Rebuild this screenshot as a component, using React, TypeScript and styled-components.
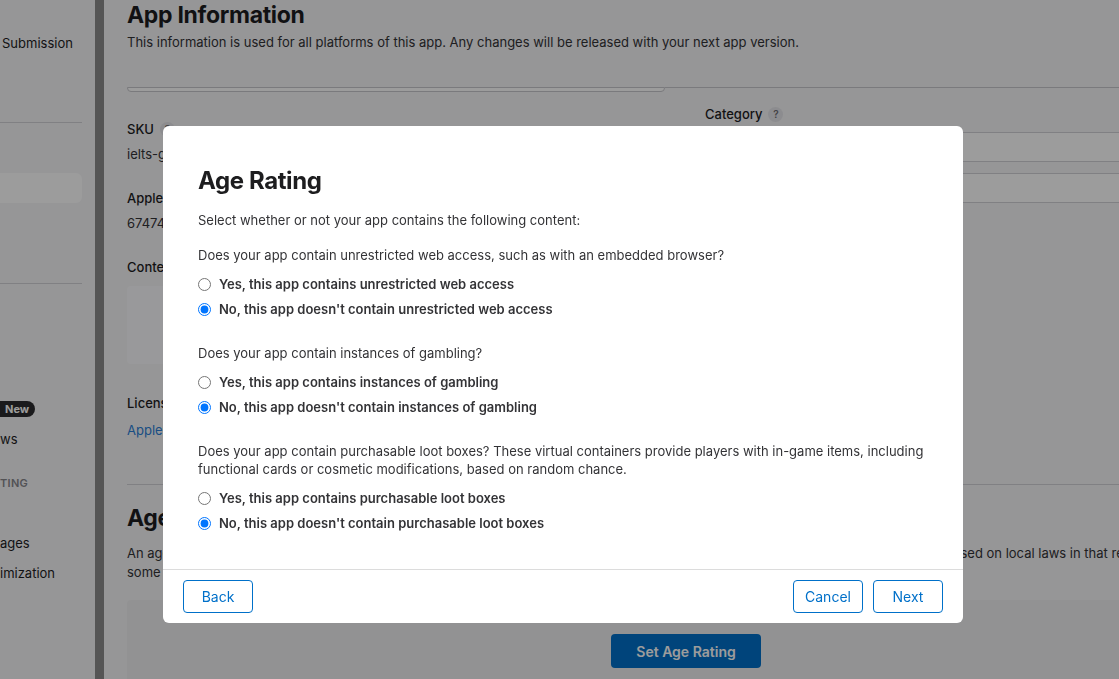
import React from "react";
import styled, { createGlobalStyle } from "styled-components";

const Global = createGlobalStyle`
  html, body { margin: 0; padding: 0; }
  body {
    font-family: Inter, "Noto Sans", "Liberation Sans", sans-serif;
    color: #1d1d1f;
    -webkit-font-smoothing: antialiased;
  }
  * { box-sizing: border-box; }
`;

const Page = styled.div`
  display: flex;
  height: 679px;
  overflow: hidden;
  background: #f5f5f7;
`;

const Sidebar = styled.nav`
  width: 95px;
  flex: none;
  display: flex;
  flex-direction: column;
  padding-right: 13px;
  overflow: hidden;
`;

const SideItem = styled.div<{ $mt?: number; $active?: boolean; $indent?: number }>`
  margin-top: ${(p) => p.$mt ?? 0}px;
  height: 30px;
  display: flex;
  align-items: center;
  padding-left: ${(p) => p.$indent ?? 0}px;
  font-size: 13px;
  color: #1d1d1f;
  white-space: nowrap;
  border-radius: 0 6px 6px 0;
  background: ${(p) => (p.$active ? "#ffffff" : "transparent")};
`;

const SideSection = styled(SideItem)`
  font-size: 11px;
  font-weight: 600;
  letter-spacing: 0.3px;
  color: #86868b;
`;

const SideRule = styled.div<{ $mt: number }>`
  margin-top: ${(p) => p.$mt}px;
  height: 1px;
  background: #d2d2d7;
`;

const Badge = styled.span`
  margin-left: -8px;
  padding: 0 6px 0 13px;
  height: 16px;
  line-height: 16px;
  border-radius: 8px;
  background: #2c2c2e;
  color: #ffffff;
  font-size: 11px;
  font-weight: 700;
`;

const Strip = styled.div`
  width: 9px;
  flex: none;
  background: #8b8b8b;
`;

const Main = styled.main`
  flex: 1;
  min-width: 0;
  overflow: hidden;
  padding-left: 23px;
`;

const Content = styled.div`
  width: 1118px;
  display: flex;
  flex-direction: column;
`;

const H1 = styled.h1<{ $mt: number }>`
  margin: ${(p) => p.$mt}px 0 0;
  font-size: 23px;
  line-height: 30px;
  letter-spacing: -0.3px;
  font-weight: 700;
  color: #1d1d1f;
`;

const Lead = styled.p<{ $mt: number }>`
  margin: ${(p) => p.$mt}px 0 0;
  font-size: 13px;
  line-height: 19px;
  color: #333336;
  white-space: nowrap;
`;

const TopRow = styled.div`
  margin-top: 35px;
  display: flex;
  align-items: flex-start;
`;

const Stub = styled.div`
  width: 538px;
  height: 5px;
  border: 1px solid #c7c7cc;
  border-radius: 0 0 4px 4px;
  background: #ffffff;
`;

const StubRule = styled.div`
  flex: 1;
  border-top: 1px solid #c7c7cc;
`;

const Grid = styled.div`
  margin-top: 13px;
  display: grid;
  grid-template-columns: 538px 1fr;
  column-gap: 40px;
  align-items: start;
`;

const Col = styled.div<{ $mt?: number }>`
  margin-top: ${(p) => p.$mt ?? 0}px;
  display: flex;
  flex-direction: column;
`;

const FieldLabel = styled.div<{ $mt?: number }>`
  margin-top: ${(p) => p.$mt ?? 0}px;
  display: flex;
  align-items: center;
  gap: 6px;
  height: 18px;
  font-size: 13px;
  font-weight: 500;
  color: #1d1d1f;
`;

const Help = styled.span`
  width: 15px;
  height: 15px;
  border-radius: 50%;
  background: #e5e5ea;
  color: #6e6e73;
  font-size: 10px;
  font-weight: 600;
  display: inline-flex;
  align-items: center;
  justify-content: center;
`;

const FieldValue = styled.div<{ $mt?: number; $link?: boolean }>`
  margin-top: ${(p) => p.$mt ?? 0}px;
  height: 18px;
  line-height: 18px;
  font-size: 13px;
  color: ${(p) => (p.$link ? "#2b7fd6" : "#333336")};
`;

const RightsBox = styled.div`
  margin-top: 10px;
  height: 78px;
  border-radius: 4px;
  background: #fbfbfd;
`;

const SelectBox = styled.div<{ $mt: number }>`
  margin-top: ${(p) => p.$mt}px;
  height: 30px;
  border: 1px solid #d2d2d7;
  border-radius: 4px;
  background: #ffffff;
`;

const SectionRule = styled.div`
  margin-top: 45px;
  height: 1px;
  background: #d2d2d7;
`;

const RatingPanel = styled.div`
  margin-top: 18px;
  height: 120px;
  border-radius: 4px;
  background: #efeff1;
  display: flex;
  justify-content: center;
  padding-top: 34px;
`;

const PrimaryButton = styled.button`
  width: 150px;
  height: 34px;
  border: 0;
  border-radius: 4px;
  background: #0070c9;
  color: #ffffff;
  font-family: inherit;
  font-size: 14px;
  font-weight: 600;
`;

const Overlay = styled.div`
  position: fixed;
  inset: 0;
  background: rgba(0, 0, 0, 0.39);
  display: flex;
  align-items: flex-start;
  padding: 126px 0 0 163px;
`;

const Modal = styled.div`
  width: 800px;
  height: 497px;
  background: #ffffff;
  border-radius: 6px;
  display: flex;
  flex-direction: column;
  overflow: hidden;
`;

const ModalBody = styled.div`
  flex: 1;
  padding: 40px 35px 0;
  display: flex;
  flex-direction: column;
`;

const ModalTitle = styled.h2`
  margin: 0;
  font-size: 24px;
  line-height: 30px;
  letter-spacing: -0.4px;
  font-weight: 700;
  color: #1d1d1f;
`;

const Text = styled.p<{ $mt: number }>`
  margin: ${(p) => p.$mt}px 0 0;
  font-size: 13px;
  line-height: 18px;
  color: #333336;
`;

const Options = styled.div`
  margin-top: 11px;
  display: flex;
  flex-direction: column;
  gap: 7px;
`;

const Option = styled.label`
  display: flex;
  align-items: center;
  gap: 8px;
  height: 18px;
  font-size: 13px;
  font-weight: 600;
  color: #333336;
`;

const Radio = styled.input.attrs({ type: "radio" })`
  margin: 0;
  width: 13px;
  height: 13px;
  flex: none;
`;

const Footer = styled.div`
  height: 54px;
  border-top: 1px solid #dcdcdc;
  padding: 10px 20px;
  display: flex;
  gap: 10px;
`;

const Spacer = styled.div`
  flex: 1;
`;

const OutlineButton = styled.button`
  width: 70px;
  height: 33px;
  border: 1px solid #0070c9;
  border-radius: 4px;
  background: #ffffff;
  color: #0070c9;
  font-family: inherit;
  font-size: 14px;
`;

type Q = { name: string; question: React.ReactNode; yes: string; no: string; gap: number };

const questions: Q[] = [
  {
    name: "web",
    question: "Does your app contain unrestricted web access, such as with an embedded browser?",
    yes: "Yes, this app contains unrestricted web access",
    no: "No, this app doesn't contain unrestricted web access",
    gap: 17,
  },
  {
    name: "gambling",
    question: "Does your app contain instances of gambling?",
    yes: "Yes, this app contains instances of gambling",
    no: "No, this app doesn't contain instances of gambling",
    gap: 26,
  },
  {
    name: "loot",
    question: (
      <>
        Does your app contain purchasable loot boxes? These virtual containers provide players with in-game items, including
        <br />
        functional cards or cosmetic modifications, based on random chance.
      </>
    ),
    yes: "Yes, this app contains purchasable loot boxes",
    no: "No, this app doesn't contain purchasable loot boxes",
    gap: 26,
  },
];

export default function App() {
  return (
    <>
      <Global />
      <Page>
        <Sidebar>
          <SideItem $mt={28} $indent={2}>Submission</SideItem>
          <SideRule $mt={64} />
          <SideItem $mt={50} $active />
          <SideRule $mt={80} />
          <SideItem $mt={110}>
            <Badge>New</Badge>
          </SideItem>
          <SideItem>ws</SideItem>
          <SideSection $mt={14}>TING</SideSection>
          <SideItem $mt={30}>ages</SideItem>
          <SideItem>imization</SideItem>
        </Sidebar>
        <Strip />
        <Main>
          <Content>
            <H1 $mt={0}>App Information</H1>
            <Lead $mt={3}>
              This information is used for all platforms of this app. Any changes will be released with your next app version.
            </Lead>
            <TopRow>
              <Stub />
              <StubRule />
            </TopRow>
            <Grid>
              <Col $mt={15}>
                <FieldLabel>
                  SKU <Help>?</Help>
                </FieldLabel>
                <FieldValue $mt={7}>ielts-general-practice</FieldValue>
                <FieldLabel $mt={26}>Apple ID</FieldLabel>
                <FieldValue $mt={7}>6747412385</FieldValue>
                <FieldLabel $mt={26}>Content Rights</FieldLabel>
                <RightsBox />
                <FieldLabel $mt={30}>License Agreement</FieldLabel>
                <FieldValue $mt={9} $link>
                  Apple’s Standard License Agreement
                </FieldValue>
              </Col>
              <Col>
                <FieldLabel>
                  Category <Help>?</Help>
                </FieldLabel>
                <SelectBox $mt={9} />
                <SelectBox $mt={11} />
              </Col>
            </Grid>
            <SectionRule />
            <H1 $mt={18}>Age Rating</H1>
            <Lead $mt={11}>
              An age rating is required for all apps on the App Store. Ratings are set per app and apply in all countries and
              regions, yet ratings vary based on local laws in that region, and
              <br />
              some regions may require additional information before your app can be made available.
            </Lead>
            <RatingPanel>
              <PrimaryButton>Set Age Rating</PrimaryButton>
            </RatingPanel>
          </Content>
        </Main>
      </Page>
      <Overlay>
        <Modal role="dialog" aria-label="Age Rating">
          <ModalBody>
            <ModalTitle>Age Rating</ModalTitle>
            <Text $mt={15}>Select whether or not your app contains the following content:</Text>
            {questions.map((q) => (
              <React.Fragment key={q.name}>
                <Text $mt={q.gap}>{q.question}</Text>
                <Options>
                  <Option>
                    <Radio name={q.name} />
                    {q.yes}
                  </Option>
                  <Option>
                    <Radio name={q.name} defaultChecked />
                    {q.no}
                  </Option>
                </Options>
              </React.Fragment>
            ))}
          </ModalBody>
          <Footer>
            <OutlineButton>Back</OutlineButton>
            <Spacer />
            <OutlineButton>Cancel</OutlineButton>
            <OutlineButton>Next</OutlineButton>
          </Footer>
        </Modal>
      </Overlay>
    </>
  );
}
